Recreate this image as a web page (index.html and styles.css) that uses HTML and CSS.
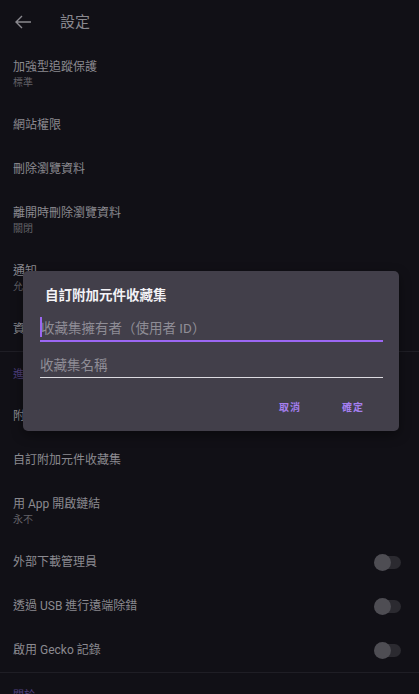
FILE: index.html
```html
<!DOCTYPE html>
<html lang="zh-Hant">
<head>
<meta charset="utf-8">
<link rel="stylesheet" href="styles.css">
</head>
<body>
<div class="page">
  <header class="topbar">
    <svg class="back" width="18" height="14" viewBox="0 0 18 14"><path d="M17 7H2M8 1L2 7l6 6" fill="none" stroke="#8a898f" stroke-width="1.4"/></svg>
    <span class="title">設定</span>
  </header>
  <div class="row two"><span class="main">加強型追蹤保護</span><span class="sub">標準</span></div>
  <div class="row"><span class="main">網站權限</span></div>
  <div class="row"><span class="main">刪除瀏覽資料</span></div>
  <div class="row two"><span class="main">離開時刪除瀏覽資料</span><span class="sub">關閉</span></div>
  <div class="row two"><span class="main">通知</span><span class="sub">允許</span></div>
  <div class="row"><span class="main">資料收集</span></div>
  <div class="divider"></div>
  <div class="section">進階</div>
  <div class="row"><span class="main">附加元件</span></div>
  <div class="row"><span class="main">自訂附加元件收藏集</span></div>
  <div class="row two"><span class="main">用 App 開啟鏈結</span><span class="sub">永不</span></div>
  <div class="row sw"><span class="main">外部下載管理員</span><span class="toggle"><span class="track"></span><span class="knob"></span></span></div>
  <div class="row sw"><span class="main">透過 USB 進行遠端除錯</span><span class="toggle"><span class="track"></span><span class="knob"></span></span></div>
  <div class="row sw"><span class="main">啟用 Gecko 記錄</span><span class="toggle"><span class="track"></span><span class="knob"></span></span></div>
  <div class="divider"></div>
  <div class="section">關於</div>
</div>
<div class="dialog">
  <div class="dtitle">自訂附加元件收藏集</div>
  <div class="field active"><span class="caret"></span><span class="ph">收藏集擁有者（使用者 ID）</span></div>
  <div class="field"><span class="ph">收藏集名稱</span></div>
  <div class="actions"><span class="btn">取消</span><span class="btn">確定</span></div>
</div>
</body>
</html>
```
FILE: styles.css
```css
html, body { margin: 0; padding: 0; }
body {
  background: #111016;
  font-family: Roboto, "Noto Sans CJK TC", sans-serif;
  width: 419px;
  height: 694px;
  overflow: hidden;
  position: relative;
}
.page { display: flex; flex-direction: column; }
.topbar {
  height: 45px;
  display: flex;
  align-items: center;
  padding-left: 14px;
  box-sizing: border-box;
}
.back { display: block; margin-top: -1px; }
.title {
  margin-left: 28px;
  font-size: 15px;
  color: #8a898f;
  line-height: 20px;
  margin-top: -2px;
}
.row {
  height: 44px;
  display: flex;
  flex-direction: column;
  justify-content: center;
  padding-left: 13px;
  box-sizing: border-box;
}
.row.two { height: 58px; }
.main { font-size: 12px; line-height: 16px; color: #8b8a90; }
.sub { font-size: 10px; line-height: 14px; color: #636268; margin-top: 1px; }
.row.sw {
  flex-direction: row;
  align-items: center;
  justify-content: space-between;
  padding-right: 18px;
}
.toggle { position: relative; width: 27px; height: 17px; display: block; }
.track {
  position: absolute; left: 3px; right: 0; top: 2px; height: 13px;
  border-radius: 7px; background: #2b2a30;
}
.knob {
  position: absolute; left: 0; top: 0; width: 17px; height: 17px;
  border-radius: 50%; background: #4e4d53;
}
.divider { height: 1px; background: #1f1e25; }
.section {
  height: 42px;
  display: flex;
  align-items: center;
  padding-left: 13px;
  font-size: 11px;
  color: #4e3f7c;
}
.dialog {
  position: absolute;
  left: 23px;
  top: 271px;
  width: 376px;
  height: 160px;
  background: #423f4a;
  border-radius: 5px;
  box-sizing: border-box;
  padding: 14px 16px 0 17px;
  display: flex;
  flex-direction: column;
  box-shadow: 0 4px 12px rgba(0,0,0,0.4);
}
.dtitle {
  font-size: 13.5px;
  font-weight: 700;
  color: #f3f2f6;
  line-height: 20px;
  padding-left: 5px;
}
.field {
  position: relative;
  height: 28px;
  display: flex;
  align-items: center;
  border-bottom: 1px solid #dcdbe0;
  margin-top: 7px;
  box-sizing: border-box;
  padding-top: 2px;
}
.field.active { border-bottom: 2px solid #9b67f2; margin-top: 9px; }
.field + .field { margin-top: 8px; }
.ph { font-size: 13.5px; color: #8f8d96; line-height: 18px; }
.caret {
  position: absolute; left: 0; top: 3px; width: 2px; height: 20px; background: #9b67f2;
}
.active .ph { margin-left: 1px; }
.actions {
  display: flex;
  justify-content: flex-end;
  gap: 41px;
  padding-right: 19px;
  margin-top: 23px;
}
.btn {
  font-size: 10px;
  font-weight: 700;
  letter-spacing: 1px;
  color: #a57ff0;
  line-height: 14px;
}
```
